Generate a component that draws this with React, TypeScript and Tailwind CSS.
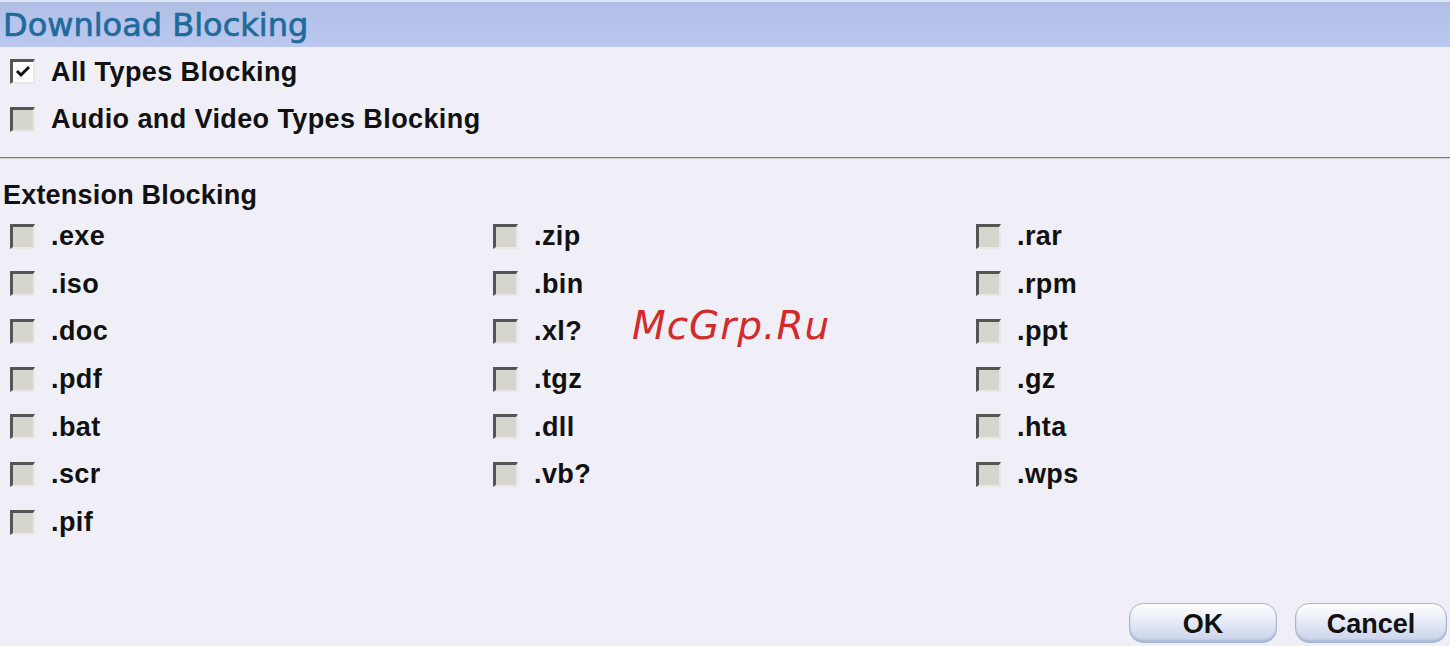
import React from 'react';

const extensions = [
  ['.exe', '.zip', '.rar'],
  ['.iso', '.bin', '.rpm'],
  ['.doc', '.xl?', '.ppt'],
  ['.pdf', '.tgz', '.gz'],
  ['.bat', '.dll', '.hta'],
  ['.scr', '.vb?', '.wps'],
  ['.pif'],
];

function Box({ checked = false }: { checked?: boolean }) {
  return (
    <span
      className={`w-[25px] h-[25px] flex-shrink-0 flex items-center justify-center border-t-[3px] border-l-[3px] border-b-2 border-r-2 border-t-[#555] border-l-[#555] border-b-[#e8e8e8] border-r-[#e8e8e8] ${
        checked ? 'bg-white' : 'bg-[#d6d6ce]'
      }`}
    >
      {checked && (
        <svg width="16" height="14" viewBox="0 0 16 14">
          <path d="M2 6 L6 10 L14 2" stroke="#111" strokeWidth="3" fill="none" />
        </svg>
      )}
    </span>
  );
}

function Item({ label, checked }: { label: string; checked?: boolean }) {
  return (
    <label className="flex items-center gap-[16px] h-[47.7px]">
      <Box checked={checked} />
      <span className="text-[27px] font-bold text-[#111] tracking-[0.4px]">{label}</span>
    </label>
  );
}

export default function App() {
  return (
    <div
      className="w-[1450px] h-[646px] bg-[#f0eff7] relative overflow-hidden"
      style={{ fontFamily: '"Liberation Sans", Arial, sans-serif' }}
    >
      <div className="h-[2px] bg-[#dce4f8]" />
      <div className="h-[45px] bg-gradient-to-b from-[#b2bfe4] to-[#bac7f0] flex items-center pl-[3px]">
        <span
          className="text-[32px] text-[#1f6b9c] leading-none [-webkit-text-stroke:0.7px_#1f6b9c]"
          style={{ fontFamily: '"DejaVu Sans", Verdana, sans-serif' }}
        >
          Download Blocking
        </span>
      </div>

      <div className="pl-[10px] pt-[1px]">
        <Item label="All Types Blocking" checked />
        <Item label="Audio and Video Types Blocking" />
      </div>

      <div className="mt-[14px] h-[2px] bg-[#7a7a7a] border-b border-[#d0d0d0]" />

      <div className="pl-[3px] pt-[23px] text-[27px] font-bold text-[#111] leading-none tracking-[0.2px]">
        Extension Blocking
      </div>

      <div className="pl-[10px] pt-[3px]">
        {extensions.map((row, i) => (
          <div key={i} className="grid grid-cols-[483px_483px_483px]">
            {row.map(ext => (
              <Item key={ext} label={ext} />
            ))}
          </div>
        ))}
      </div>

      <div className="absolute right-[3px] bottom-[3px] flex gap-[18px]">
        <button className="w-[148px] h-[40px] rounded-[14px] border border-[#aab4cc] bg-gradient-to-b from-[#ffffff] via-[#e4e9f6] to-[#c8d2ea] text-[27px] font-bold text-[#111] shadow-[inset_0_-2px_2px_rgba(120,140,180,0.4)]">
          OK
        </button>
        <button className="w-[152px] h-[40px] rounded-[14px] border border-[#aab4cc] bg-gradient-to-b from-[#ffffff] via-[#e4e9f6] to-[#c8d2ea] text-[27px] font-bold text-[#111] shadow-[inset_0_-2px_2px_rgba(120,140,180,0.4)]">
          Cancel
        </button>
      </div>

      <div
        className="absolute left-[632px] top-[297px] text-[39px] italic text-[#d42a2a] tracking-[1px]"
        style={{ fontFamily: '"DejaVu Sans", sans-serif' }}
      >
        McGrp.Ru
      </div>
    </div>
  );
}
